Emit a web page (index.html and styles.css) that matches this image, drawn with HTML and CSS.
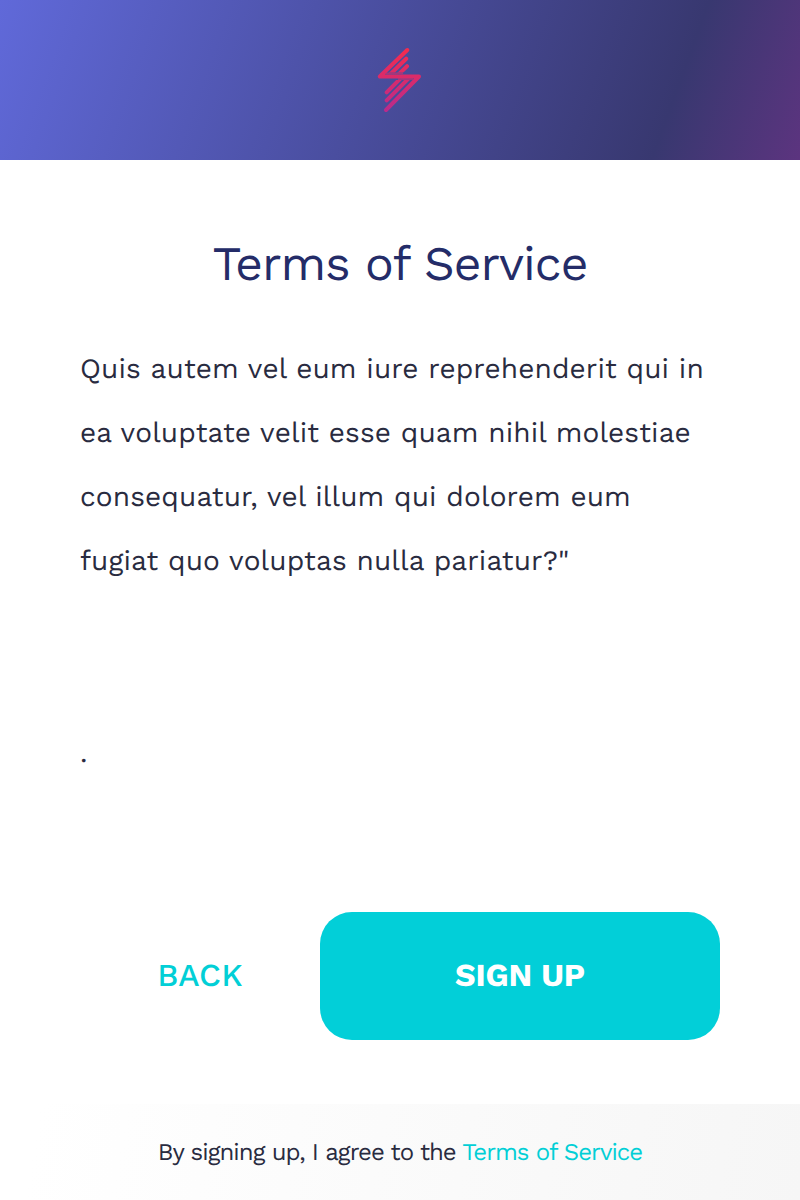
FILE: index.html
```html
<!DOCTYPE html>
<html lang="en">
<head>
<meta charset="utf-8">
<title>Terms of Service</title>
<link rel="stylesheet" href="styles.css">
</head>
<body>
<header class="header">
  <svg class="logo" viewBox="0 0 48 68" aria-hidden="true">
    <defs>
      <linearGradient id="bolt" gradientUnits="userSpaceOnUse" x1="0" y1="2" x2="0" y2="66">
        <stop offset="0" stop-color="#f52b4d"/>
        <stop offset="1" stop-color="#b82b8d"/>
      </linearGradient>
      <clipPath id="upper"><path d="M0 0H48V26.5H0z"/></clipPath>
      <clipPath id="lower"><path d="M0 34H48V68H0z"/></clipPath>
    </defs>
    <g fill="none" stroke="url(#bolt)" stroke-width="4" stroke-linecap="round" stroke-linejoin="round">
      <path d="M31.3 4L3.8 30.5H43L10 64"/>
      <path d="M30.2 12.7L13 29.5M31 20.2L22 29" clip-path="url(#upper)"/>
      <path d="M10.7 46.3L28 29M10.7 54.3L36 29" clip-path="url(#lower)"/>
    </g>
    <path d="M10 27.3H27M22 33.2H37" fill="none" stroke="url(#bolt)" stroke-width="1.8" opacity=".6"/>
  </svg>
</header>
<main class="content">
  <h1 class="title">Terms of Service</h1>
  <div class="terms">
    <p class="copy">Quis autem vel eum iure reprehenderit qui in ea voluptate velit esse quam nihil molestiae consequatur, vel illum qui dolorem eum fugiat quo voluptas nulla pariatur?"</p>
    <p class="copy">.</p>
  </div>
  <div class="actions">
    <button class="button back" type="button">BACK</button>
    <button class="button signup" type="button">SIGN UP</button>
  </div>
</main>
<footer class="footer"><p class="agree">By signing up, I agree to the <a class="link">Terms of Service</a></p></footer>
</body>
</html>
```
FILE: styles.css
```css
* { box-sizing: border-box; }
body {
  margin: 0;
  height: 1200px;
  display: flex;
  flex-direction: column;
  background: #fff;
  color: #292b40;
  font-family: "Work Sans", Inter, sans-serif;
  text-rendering: geometricPrecision;
}
.header {
  height: 160px;
  display: flex;
  align-items: center;
  justify-content: center;
  background: linear-gradient(110deg, #6069d9 0%, #383870 82.7%, #5c347f 100%);
}
.logo { width: 48px; height: 68px; }
.content { flex: 1; padding: 72px 80px 64px; display: flex; flex-direction: column; }
.title {
  margin: 0 0 41px;
  font-size: 48px;
  line-height: 64px;
  font-weight: 400;
  letter-spacing: -0.96px;
  color: #242c68;
  text-align: center;
  white-space: nowrap;
}
.terms { height: 540px; padding-right: 10px; }
.copy { margin: 0 0 128px; font-size: 28px; line-height: 64px; letter-spacing: 0.12px; }
.actions { margin-top: auto; display: grid; grid-template-columns: 240px 400px; height: 128px; }
.button { border: 0; padding: 0 0 2px; font: 500 32px/40px "Work Sans", Inter, sans-serif; border-radius: 32px; text-rendering: geometricPrecision; }
.back { background: none; color: #02cfd6; letter-spacing: 0.2px; }
.signup { background: #02cfd8; color: #fff; font-weight: 700; letter-spacing: -0.1px; }
.footer {
  height: 96px;
  display: flex;
  align-items: center;
  justify-content: center;
  background: linear-gradient(100deg, #fff 5%, #f6f6f6 100%);
}
.agree { margin: 0; font-size: 24px; letter-spacing: -0.96px; white-space: nowrap; }
.link { color: #02cfd6; }
```
